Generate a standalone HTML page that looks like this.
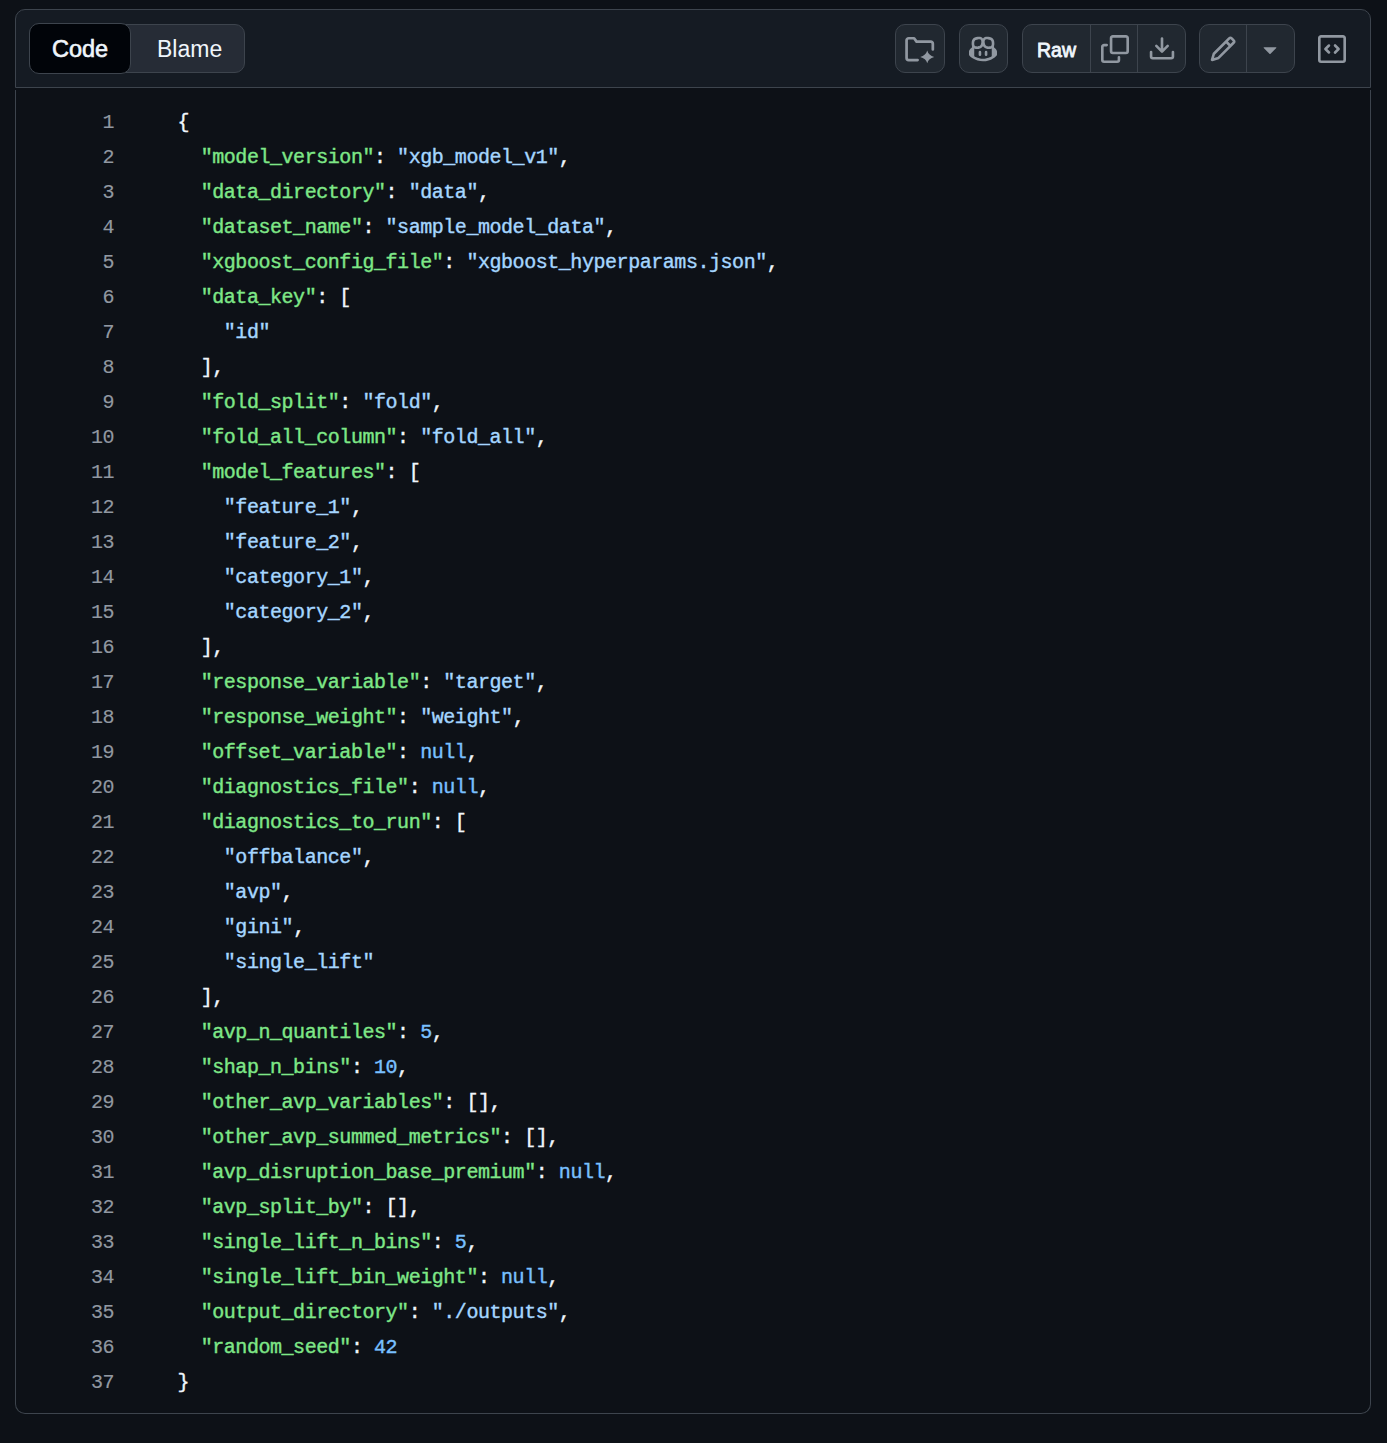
<!DOCTYPE html>
<html>
<head>
<meta charset="utf-8">
<style>
html, body { margin: 0; padding: 0; }
body { width: 1387px; height: 1443px; overflow: hidden; background: #0d1117; position: relative; font-family: "Liberation Sans", sans-serif; }
.abs { position: absolute; box-sizing: border-box; }
#hdr { left: 15px; top: 9px; width: 1356px; height: 79px; background: #151b23; border: 1px solid #3d444d; border-radius: 10px 10px 0 0; }
#body { left: 15px; top: 90px; width: 1356px; height: 1324px; background: #0d1117; border: 1px solid #3d444d; border-top: none; border-radius: 0 0 10px 10px; }
.seg { left: 29px; top: 24px; width: 216px; height: 49px; background: #262c36; border: 1px solid #3d444d; border-radius: 10px; }
.knob { left: 29px; top: 23px; width: 102px; height: 51px; background: #010409; border: 1px solid #3d444d; border-radius: 10px; }
.lbl { color: #f0f6fc; font-size: 24px; line-height: 30px; white-space: nowrap; }
.btn { background: #212830; border: 1px solid #3d444d; border-radius: 10px; height: 49px; top: 24px; }
.div { width: 1px; background: #3d444d; top: 24px; height: 49px; }
svg.ic { overflow: visible; position: absolute; width: 28px; height: 28px; fill: #9198a1; }
#nums { left: 15px; top: 105px; width: 99px; text-align: right; color: #9198a1; -webkit-text-stroke: 0.15px; }
#code { left: 177.6px; top: 105px; color: #f0f6fc; }
#code div { white-space: pre; height: 35px; }
.mono { font-family: "Liberation Mono", monospace; font-size: 20px; letter-spacing: -0.45px; line-height: 35px; -webkit-text-stroke: 0.4px; }
.k { color: #7ee787; }
.s { color: #a5d6ff; }
.c { color: #79c0ff; }
</style>
</head>
<body>
<div id="hdr" class="abs"></div>
<div id="body" class="abs"></div>

<div class="abs seg"></div>
<div class="abs knob"></div>
<div class="abs lbl" style="left:52px;top:34px;font-size:23.5px;-webkit-text-stroke:0.6px;">Code</div>
<div class="abs lbl" style="left:157px;top:34px;font-size:23px;">Blame</div>

<!-- folder sparkle -->
<div class="abs btn" style="left:895px;width:50px;"></div>
<svg class="ic" style="left:905px;top:35px;" viewBox="0 0 16 16"><path d="M7.2 14.35H2.1A1.2 1.2 0 0 1 0.9 13.15V3.05A1.2 1.2 0 0 1 2.1 1.85H5.2L6.6 3.8H14.7A1.2 1.2 0 0 1 15.9 5.0V8.25" fill="none" stroke="#9198a1" stroke-width="1.55" stroke-linecap="round" stroke-linejoin="round"/><path d="M12.7 8.9Q13.45 11.75 16.7 12.5Q13.45 13.25 12.7 16.1Q11.95 13.25 8.7 12.5Q11.95 11.75 12.7 8.9Z"/></svg>

<!-- copilot -->
<div class="abs btn" style="left:959px;width:49px;"></div>
<svg class="ic" style="left:969px;top:35px;" viewBox="0 0 16 16"><path d="M7.998 15.035c-4.562 0-7.873-2.914-7.998-3.749V9.338c.085-.628.677-1.686 1.588-2.065.013-.07.024-.143.036-.218.029-.183.06-.384.126-.612-.201-.508-.254-1.084-.254-1.656 0-.87.128-1.769.693-2.484.579-.733 1.494-1.124 2.724-1.261 1.206-.134 2.262.034 2.944.765.05.053.096.108.139.165.044-.057.094-.112.143-.165.682-.731 1.738-.899 2.944-.765 1.23.137 2.145.528 2.724 1.261.566.715.693 1.614.693 2.484 0 .572-.053 1.148-.254 1.656.066.228.098.429.126.612.012.076.024.148.037.218.924.385 1.522 1.471 1.591 2.095v1.872c0 .766-3.351 3.795-8.002 3.795Zm0-1.485c2.28 0 4.584-1.11 5.002-1.433V7.862l-.023-.116c-.49.21-1.075.291-1.727.291-1.146 0-2.059-.327-2.71-.991A3.222 3.222 0 0 1 8 6.303a3.24 3.24 0 0 1-.544.743c-.65.664-1.563.991-2.71.991-.652 0-1.236-.081-1.727-.291l-.023.116v4.255c.419.323 2.722 1.433 5.002 1.433ZM6.762 2.83c-.193-.206-.637-.413-1.682-.297-1.019.113-1.479.404-1.713.7-.247.312-.369.789-.369 1.554 0 .793.129 1.171.308 1.371.162.181.519.379 1.442.379.853 0 1.339-.235 1.638-.54.315-.322.527-.827.617-1.553.117-.935-.037-1.395-.241-1.614Zm4.155-.297c-1.044-.116-1.488.091-1.681.297-.204.219-.359.679-.242 1.614.091.726.303 1.231.618 1.553.299.305.784.54 1.638.54.922 0 1.28-.198 1.442-.379.179-.2.308-.578.308-1.371 0-.765-.123-1.242-.37-1.554-.233-.296-.693-.587-1.713-.7Z"/><path d="M6.25 9.037a.75.75 0 0 1 .75.75v1.501a.75.75 0 0 1-1.5 0V9.787a.75.75 0 0 1 .75-.75Zm4.25.75v1.501a.75.75 0 0 1-1.5 0V9.787a.75.75 0 0 1 1.5 0Z"/></svg>

<!-- raw group -->
<div class="abs btn" style="left:1022px;width:164px;"></div>
<div class="abs div" style="left:1090px;"></div>
<div class="abs div" style="left:1137px;"></div>
<div class="abs lbl" style="left:1037px;top:35px;font-size:19.5px;-webkit-text-stroke:0.8px;">Raw</div>
<svg class="ic" style="left:1101px;top:35px;" viewBox="0 0 16 16"><path d="M0 6.75C0 5.784.784 5 1.75 5h1.5a.75.75 0 0 1 0 1.5h-1.5a.25.25 0 0 0-.25.25v7.5c0 .138.112.25.25.25h7.5a.25.25 0 0 0 .25-.25v-1.5a.75.75 0 0 1 1.5 0v1.5A1.75 1.75 0 0 1 9.25 16h-7.5A1.75 1.75 0 0 1 0 14.25Z"/><path d="M5 1.75C5 .784 5.784 0 6.75 0h7.5C15.216 0 16 .784 16 1.75v7.5A1.75 1.75 0 0 1 14.25 11h-7.5A1.75 1.75 0 0 1 5 9.25Zm1.75-.25a.25.25 0 0 0-.25.25v7.5c0 .138.112.25.25.25h7.5a.25.25 0 0 0 .25-.25v-7.5a.25.25 0 0 0-.25-.25Z"/></svg>
<svg class="ic" style="left:1148px;top:35px;" viewBox="0 0 16 16"><path d="M2.75 14A1.75 1.75 0 0 1 1 12.25v-2.5a.75.75 0 0 1 1.5 0v2.5c0 .138.112.25.25.25h10.5a.25.25 0 0 0 .25-.25v-2.5a.75.75 0 0 1 1.5 0v2.5A1.75 1.75 0 0 1 13.250 14Z"/><path d="M7.25 7.689V2a.75.75 0 0 1 1.5 0v5.689l1.97-1.969a.749.749 0 1 1 1.06 1.06l-3.25 3.25a.749.749 0 0 1-1.06 0L4.22 6.78a.749.749 0 1 1 1.06-1.06l1.97 1.969Z"/></svg>

<!-- edit group -->
<div class="abs btn" style="left:1199px;width:96px;"></div>
<div class="abs div" style="left:1246px;"></div>
<svg class="ic" style="left:1209px;top:35px;" viewBox="0 0 16 16"><path d="M11.013 1.427a1.75 1.75 0 0 1 2.474 0l1.086 1.086a1.75 1.75 0 0 1 0 2.474l-8.61 8.61c-.21.21-.47.364-.756.445l-3.251.93a.75.75 0 0 1-.927-.928l.929-3.25c.081-.286.235-.547.445-.758l8.61-8.61Zm.176 4.823L9.75 4.81l-6.286 6.287a.253.253 0 0 0-.064.108l-.558 1.953 1.953-.558a.253.253 0 0 0 .108-.064Zm1.238-3.763a.25.25 0 0 0-.354 0L10.811 3.75l1.439 1.44 1.263-1.263a.25.25 0 0 0 0-.354Z"/></svg>
<svg class="ic" style="left:1256px;top:35px;" viewBox="0 0 16 16"><path d="m4.427 7.427 3.396 3.396a.25.25 0 0 0 .354 0l3.396-3.396A.25.25 0 0 0 11.396 7H4.604a.25.25 0 0 0-.177.427Z"/></svg>

<!-- code square -->
<svg class="ic" style="left:1318px;top:35px;" viewBox="0 0 16 16"><path d="M0 1.75C0 .784.784 0 1.75 0h12.5C15.216 0 16 .784 16 1.75v12.5A1.75 1.75 0 0 1 14.25 16H1.75A1.75 1.75 0 0 1 0 14.25Zm1.75-.25a.25.25 0 0 0-.25.25v12.5c0 .138.112.25.25.25h12.5a.25.25 0 0 0 .25-.25V1.75a.25.25 0 0 0-.25-.25Zm7.47 3.970a.75.75 0 0 1 1.06 0l2 2a.75.75 0 0 1 0 1.06l-2 2a.75.75 0 1 1-1.06-1.06l1.47-1.47-1.47-1.47a.75.75 0 0 1 0-1.06ZM6.78 6.53 5.31 8l1.470 1.47a.749.749 0 0 1-.326 1.275.749.749 0 0 1-.734-.215l-2-2a.75.75 0 0 1 0-1.06l2-2a.751.751 0 0 1 1.042.018.751.751 0 0 1 .018 1.042Z"/></svg>

<div id="nums" class="abs mono">
<div>1</div>
<div>2</div>
<div>3</div>
<div>4</div>
<div>5</div>
<div>6</div>
<div>7</div>
<div>8</div>
<div>9</div>
<div>10</div>
<div>11</div>
<div>12</div>
<div>13</div>
<div>14</div>
<div>15</div>
<div>16</div>
<div>17</div>
<div>18</div>
<div>19</div>
<div>20</div>
<div>21</div>
<div>22</div>
<div>23</div>
<div>24</div>
<div>25</div>
<div>26</div>
<div>27</div>
<div>28</div>
<div>29</div>
<div>30</div>
<div>31</div>
<div>32</div>
<div>33</div>
<div>34</div>
<div>35</div>
<div>36</div>
<div>37</div>
</div>
<div id="code" class="abs mono">
<div>{</div>
<div>  <span class="k">&quot;model_version&quot;</span>: <span class="s">&quot;xgb_model_v1&quot;</span>,</div>
<div>  <span class="k">&quot;data_directory&quot;</span>: <span class="s">&quot;data&quot;</span>,</div>
<div>  <span class="k">&quot;dataset_name&quot;</span>: <span class="s">&quot;sample_model_data&quot;</span>,</div>
<div>  <span class="k">&quot;xgboost_config_file&quot;</span>: <span class="s">&quot;xgboost_hyperparams.json&quot;</span>,</div>
<div>  <span class="k">&quot;data_key&quot;</span>: [</div>
<div>    <span class="s">&quot;id&quot;</span></div>
<div>  ],</div>
<div>  <span class="k">&quot;fold_split&quot;</span>: <span class="s">&quot;fold&quot;</span>,</div>
<div>  <span class="k">&quot;fold_all_column&quot;</span>: <span class="s">&quot;fold_all&quot;</span>,</div>
<div>  <span class="k">&quot;model_features&quot;</span>: [</div>
<div>    <span class="s">&quot;feature_1&quot;</span>,</div>
<div>    <span class="s">&quot;feature_2&quot;</span>,</div>
<div>    <span class="s">&quot;category_1&quot;</span>,</div>
<div>    <span class="s">&quot;category_2&quot;</span>,</div>
<div>  ],</div>
<div>  <span class="k">&quot;response_variable&quot;</span>: <span class="s">&quot;target&quot;</span>,</div>
<div>  <span class="k">&quot;response_weight&quot;</span>: <span class="s">&quot;weight&quot;</span>,</div>
<div>  <span class="k">&quot;offset_variable&quot;</span>: <span class="c">null</span>,</div>
<div>  <span class="k">&quot;diagnostics_file&quot;</span>: <span class="c">null</span>,</div>
<div>  <span class="k">&quot;diagnostics_to_run&quot;</span>: [</div>
<div>    <span class="s">&quot;offbalance&quot;</span>,</div>
<div>    <span class="s">&quot;avp&quot;</span>,</div>
<div>    <span class="s">&quot;gini&quot;</span>,</div>
<div>    <span class="s">&quot;single_lift&quot;</span></div>
<div>  ],</div>
<div>  <span class="k">&quot;avp_n_quantiles&quot;</span>: <span class="c">5</span>,</div>
<div>  <span class="k">&quot;shap_n_bins&quot;</span>: <span class="c">10</span>,</div>
<div>  <span class="k">&quot;other_avp_variables&quot;</span>: [],</div>
<div>  <span class="k">&quot;other_avp_summed_metrics&quot;</span>: [],</div>
<div>  <span class="k">&quot;avp_disruption_base_premium&quot;</span>: <span class="c">null</span>,</div>
<div>  <span class="k">&quot;avp_split_by&quot;</span>: [],</div>
<div>  <span class="k">&quot;single_lift_n_bins&quot;</span>: <span class="c">5</span>,</div>
<div>  <span class="k">&quot;single_lift_bin_weight&quot;</span>: <span class="c">null</span>,</div>
<div>  <span class="k">&quot;output_directory&quot;</span>: <span class="s">&quot;./outputs&quot;</span>,</div>
<div>  <span class="k">&quot;random_seed&quot;</span>: <span class="c">42</span></div>
<div>}</div>
</div>
</body>
</html>
